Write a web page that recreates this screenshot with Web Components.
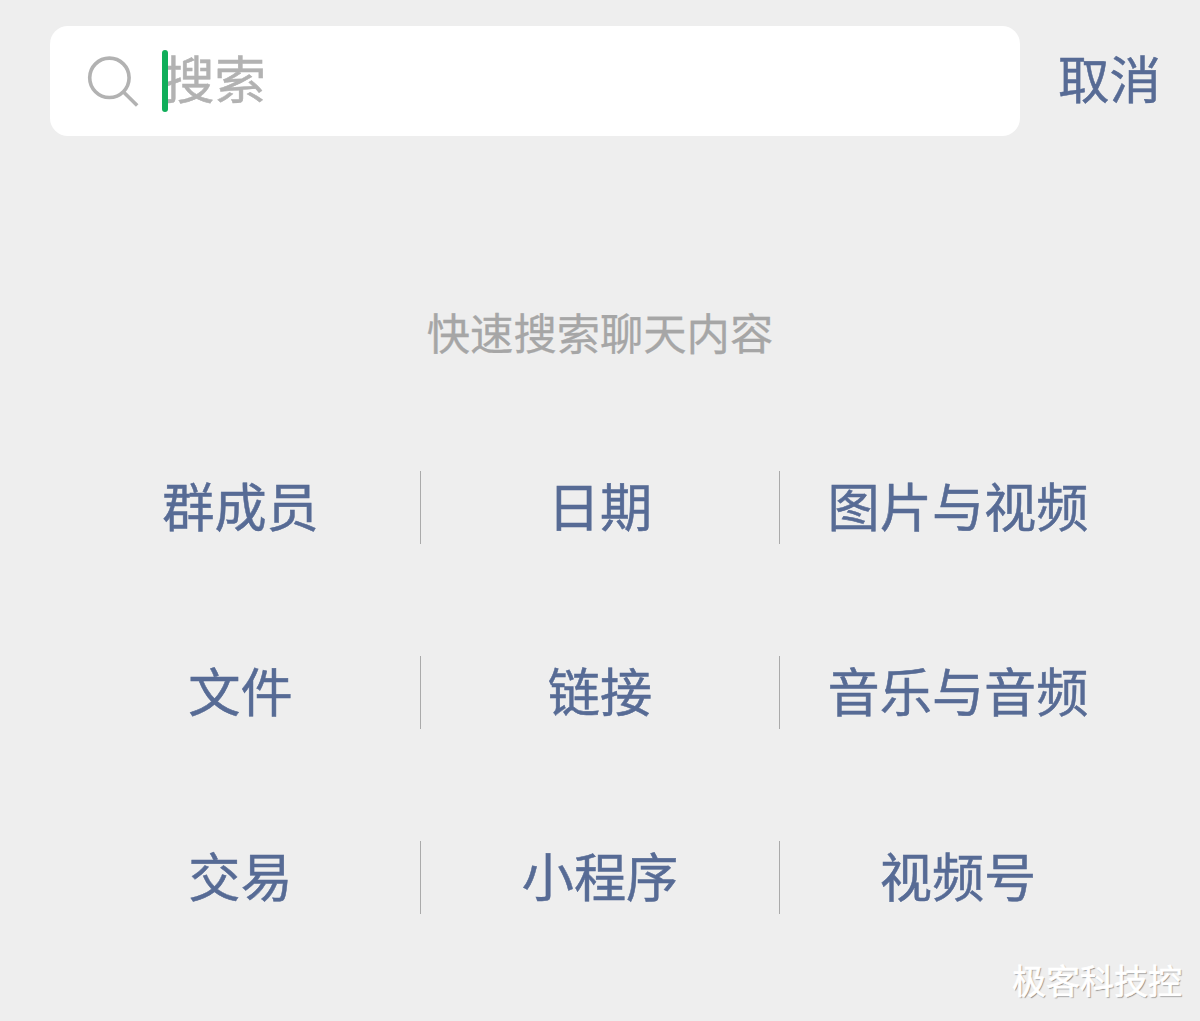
<!DOCTYPE html>
<html lang="zh-CN">
<head>
<meta charset="utf-8">
<title>搜索</title>
<style>
  body {
    margin: 0;
    font-family: "Noto Sans CJK SC", sans-serif;
    background: #eee;
  }
</style>
</head>
<body>
<chat-search-page></chat-search-page>
<script>
(function () {

  const ICONS = {
    search: `<svg xmlns="http://www.w3.org/2000/svg" viewBox="0 0 52 52" fill="none" stroke="currentColor" stroke-width="3.6"><circle cx="22.4" cy="22.8" r="19.7"/><path d="M36 36.5l14.2 14"/></svg>`,
  }

  const FILTERS = [
    ['群成员', '日期', '图片与视频'],
    ['文件', '链接', '音乐与音频'],
    ['交易', '小程序', '视频号'],
  ];

  class SearchBar extends HTMLElement {
    constructor() {
      super();
      this.attachShadow({mode: 'open'});
      this.shadowRoot.innerHTML = `
        <style>
        :host {
          display: flex;
          align-items: center;
          height: 110px;
          padding: 26px 30px 0 50px;
          font-size: 51.5px;
          line-height: 74px;
          -webkit-text-stroke: 0.5px;
        }
        .field {
          box-sizing: border-box;
          display: flex;
          flex-shrink: 0;
          align-items: center;
          width: 970px;
          height: 110px;
          padding-left: 37px;
          border-radius: 18px;
          background: #fff;
          color: #b2b2b2;
        }
        svg {
          width: 52px;
          height: 52px;
          margin-right: 23px;
        }
        .caret {
          width: 6px;
          height: 62px;
          margin-right: -5px;
          border-radius: 3px;
          background: #10ae5a;
          z-index: 1;
        }
        .cancel {
          margin-left: 38px;
          color: #576b95;
          white-space: nowrap;
        }
        .placeholder, .cancel {
          padding-bottom: 9px;
        }
        </style>
        <div class="field">
          ${ICONS['search']}
          <span class="caret"></span>
          <span class="placeholder"><slot></slot></span>
        </div>
        <span class="cancel"><slot name="cancel"></slot></span>
      `;
    }
  }

  class FilterItem extends HTMLElement {
    constructor() {
      super();
      this.attachShadow({mode: 'open'});
      this.shadowRoot.innerHTML = `
        <style>
        :host {
          box-sizing: border-box;
          display: flex;
          justify-content: center;
          height: 73px;
          font-size: 52.2px;
          line-height: 66px;
          color: #576b95;
          white-space: nowrap;
          -webkit-text-stroke: 0.5px;
        }
        :host([divided]) {
          border-right: 1px solid #aaa;
        }
        </style>
        <slot></slot>
      `;
    }
  }

  class FilterGrid extends HTMLElement {
    constructor() {
      super();
      this.attachShadow({mode: 'open'});
      const items = FILTERS.map(row => row.map((label, i) =>
        `<filter-item${i < row.length - 1 ? ' divided' : ''}>${label}</filter-item>`
      ).join('')).join('');
      this.shadowRoot.innerHTML = `
        <style>
        :host {
          display: grid;
          grid-template-columns: 360px 359px 356px;
          row-gap: 112px;
          padding-left: 61px;
        }
        </style>
        ${items}
      `;
    }
  }

  class ChatSearchPage extends HTMLElement {
    constructor() {
      super();
      this.attachShadow({mode: 'open'});
      this.shadowRoot.innerHTML = `
        <style>
        :host {
          position: relative;
          display: flex;
          flex-direction: column;
          height: 1021px;
          overflow: hidden;
        }
        .hint {
          margin: 164px 0 109px;
          font-size: 43.3px;
          line-height: 62px;
          text-align: center;
          color: #a6a6a6;
          -webkit-text-stroke: 0.3px;
        }
        .watermark {
          position: absolute;
          right: 18px;
          bottom: 16px;
          font-size: 34px;
          line-height: 50px;
          color: #fff;
          text-shadow: 1px 1px 1px #888;
          -webkit-text-stroke: 0.7px;
        }
        </style>
        <search-bar>搜索<span slot="cancel">取消</span></search-bar>
        <div class="hint">快速搜索聊天内容</div>
        <filter-grid></filter-grid>
        <div class="watermark">极客科技控</div>
      `;
    }
  }

  customElements.define('search-bar', SearchBar);
  customElements.define('filter-item', FilterItem);
  customElements.define('filter-grid', FilterGrid);
  customElements.define('chat-search-page', ChatSearchPage);
})();
</script>
</body>
</html>
